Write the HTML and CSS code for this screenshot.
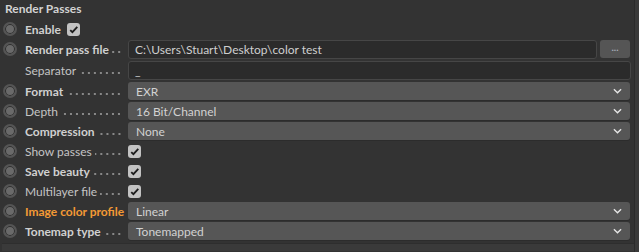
FILE: index.html
```html
<!DOCTYPE html>
<html lang="en">
<head>
  <meta charset="UTF-8" />
  <title>Render Passes</title>
  <link rel="stylesheet" href="styles.css">
</head>
<body>

<div class="panel">
  <div class="title">Render Passes</div>

  <div class="row">
    <span class="radio"></span>
    <span class="label bold short">Enable</span>
    <span class="check"><svg viewBox="0 0 12 12"><polyline points="3,6.5 5,8.5 9.5,3.5"/></svg></span>
  </div>

  <div class="row">
    <span class="radio"></span>
    <span class="label bold">Render pass file<i class="dots"></i></span>
    <span class="input">C:\Users\Stuart\Desktop\color test</span>
    <span class="browse">...</span>
  </div>

  <div class="row tall">
    <span class="radio none"></span>
    <span class="label">Separator<i class="dots"></i></span>
    <span class="input">_</span>
  </div>

  <div class="row">
    <span class="radio"></span>
    <span class="label bold">Format<i class="dots"></i></span>
    <span class="select">EXR<svg viewBox="0 0 10 6"><polyline points="1,1 5,5 9,1"/></svg></span>
  </div>

  <div class="row">
    <span class="radio"></span>
    <span class="label">Depth<i class="dots"></i></span>
    <span class="select">16 Bit/Channel<svg viewBox="0 0 10 6"><polyline points="1,1 5,5 9,1"/></svg></span>
  </div>

  <div class="row">
    <span class="radio"></span>
    <span class="label bold">Compression<i class="dots"></i></span>
    <span class="select">None<svg viewBox="0 0 10 6"><polyline points="1,1 5,5 9,1"/></svg></span>
  </div>

  <div class="row">
    <span class="radio"></span>
    <span class="label">Show passes<i class="dots"></i></span>
    <span class="check"><svg viewBox="0 0 12 12"><polyline points="3,6.5 5,8.5 9.5,3.5"/></svg></span>
  </div>

  <div class="row">
    <span class="radio"></span>
    <span class="label bold">Save beauty<i class="dots"></i></span>
    <span class="check"><svg viewBox="0 0 12 12"><polyline points="3,6.5 5,8.5 9.5,3.5"/></svg></span>
  </div>

  <div class="row">
    <span class="radio"></span>
    <span class="label">Multilayer file<i class="dots"></i></span>
    <span class="check"><svg viewBox="0 0 12 12"><polyline points="3,6.5 5,8.5 9.5,3.5"/></svg></span>
  </div>

  <div class="row">
    <span class="radio"></span>
    <span class="label bold orange">Image color profile</span>
    <span class="select">Linear<svg viewBox="0 0 10 6"><polyline points="1,1 5,5 9,1"/></svg></span>
  </div>

  <div class="row">
    <span class="radio"></span>
    <span class="label bold">Tonemap type<i class="dots"></i></span>
    <span class="select">Tonemapped<svg viewBox="0 0 10 6"><polyline points="1,1 5,5 9,1"/></svg></span>
  </div>

  <div class="footer"></div>
</div>

</body>
</html>
```

FILE: styles.css
```css
* {
  margin: 0;
  padding: 0;
  box-sizing: border-box;
}

body {
  background: #3a3a3a;
  font-family: Lato, sans-serif;
  font-size: 12px;
  color: #c9c9c9;
  width: 639px;
  height: 252px;
  overflow: hidden;
}

.panel {
  width: 635px;
  height: 252px;
  background: #333333;
  border-right: 1px solid #2b2b2b;
}

.title {
  height: 19px;
  padding: 1px 0 0 5px;
  font-weight: bold;
  color: #d2d2d2;
}

.row {
  display: flex;
  align-items: center;
  height: 20px;
}

.row.tall {
  height: 22px;
}

.radio {
  width: 14px;
  height: 14px;
  margin: 0 8px 0 3px;
  border-radius: 50%;
  background: #6a6a6a;
  border: 2px solid #545454;
  box-shadow: inset 0 0 0 1px #2c2c2c;
  flex-shrink: 0;
}

.radio.none {
  visibility: hidden;
}

.label {
  display: flex;
  align-items: baseline;
  width: 103px;
  flex-shrink: 0;
  white-space: nowrap;
  color: #c4c4c4;
}

.label.short {
  width: auto;
  margin-right: 6px;
}

.label.bold {
  font-weight: bold;
  color: #d0d0d0;
}

.label.orange {
  color: #f39a35;
}

.dots {
  flex: 1;
  height: 4px;
  margin: 0 6px 0 3px;
  background-image: radial-gradient(circle, #8a8a8a 0.7px, transparent 1px);
  background-size: 6px 4px;
  background-repeat: repeat-x;
  background-position: right bottom;
}

.input {
  flex: 1;
  height: 19px;
  line-height: 17px;
  padding-left: 6px;
  margin-right: 3px;
  background: #2b2b2b;
  border: 1px solid #464646;
  border-radius: 3px;
  color: #cfcfcf;
}

.browse {
  width: 30px;
  height: 18px;
  margin-right: 4px;
  background: #555;
  border-radius: 3px;
  text-align: center;
  line-height: 14px;
  color: #a9aebb;
  font-size: 10px;
  font-weight: bold;
}

.select {
  display: flex;
  justify-content: space-between;
  align-items: center;
  flex: 1;
  height: 18px;
  padding: 0 8px;
  margin-right: 4px;
  background: #565656;
  border-radius: 3px;
  color: #d2d2d2;
  box-shadow: 0 1px 0 #2c2c2c;
}

.select svg {
  width: 9px;
  height: 6px;
  fill: none;
  stroke: #e6e6e6;
  stroke-width: 1.5;
}

.check {
  width: 13px;
  height: 13px;
  background: #c3c3c3;
  border-radius: 3px;
}

.check svg {
  width: 13px;
  height: 13px;
  fill: none;
  stroke: #1e1e1e;
  stroke-width: 1.7;
}

.footer {
  height: 8px;
  margin: 2px 0 0 2px;
  background: #3a3a3a;
  border-top: 1px solid #2e2e2e;
}
```
